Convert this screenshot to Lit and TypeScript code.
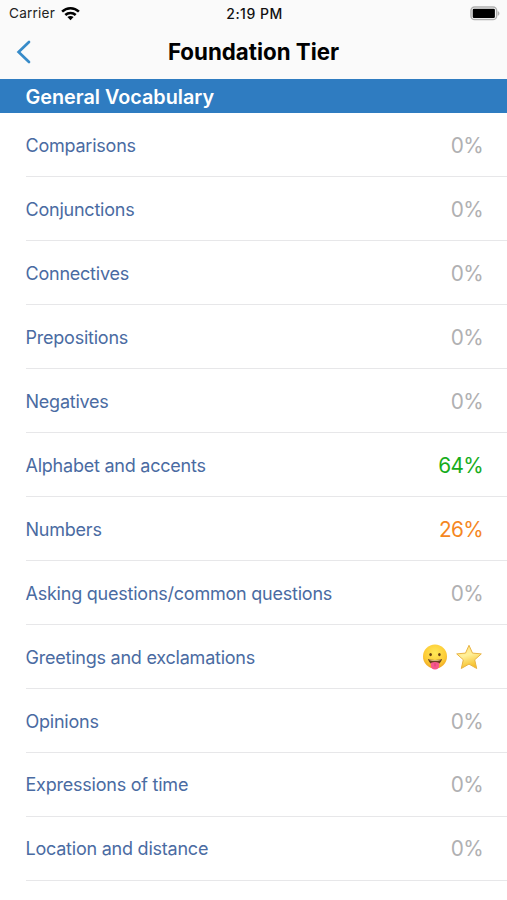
import { LitElement, html, css } from "lit";
import { customElement, property } from "lit/decorators.js";
import { classMap } from "lit/directives/class-map.js";

interface Topic {
  name: string;
  score?: number;
}

const topics: Topic[] = [
  { name: "Comparisons", score: 0 },
  { name: "Conjunctions", score: 0 },
  { name: "Connectives", score: 0 },
  { name: "Prepositions", score: 0 },
  { name: "Negatives", score: 0 },
  { name: "Alphabet and accents", score: 64 },
  { name: "Numbers", score: 26 },
  { name: "Asking questions/common questions", score: 0 },
  { name: "Greetings and exclamations" },
  { name: "Opinions", score: 0 },
  { name: "Expressions of time", score: 0 },
  { name: "Location and distance", score: 0 },
];

@customElement("status-bar")
export class StatusBar extends LitElement {
  static styles = css`
    :host {
      display: grid;
      grid-template-columns: 1fr auto 1fr;
      align-items: center;
      height: 27px;
      padding: 0 7px 0 9px;
      font-size: 13.6px;
      line-height: 27px;
      color: #222;
    }
    .carrier {
      display: flex;
      align-items: center;
      gap: 6px;
      letter-spacing: 0.2px;
    }
    .time {
      font-size: 14px;
      font-weight: 500;
      color: #111;
      letter-spacing: 0.5px;
    }
    .battery {
      justify-self: end;
    }
    svg {
      display: block;
    }
  `;

  render() {
    return html`
      <div class="carrier">
        <span>Carrier</span>
        <svg width="19" height="15" viewBox="0 0 19 15">
          <g fill="none" stroke="#000" stroke-width="2.5">
            <path d="M1.1 5.7C5.8 1.1 13.2 1.1 17.9 5.7" />
            <path d="M4.3 9C7.2 6.2 11.8 6.2 14.7 9" />
          </g>
          <path d="M6.4 11.1C8.2 9.5 10.8 9.5 12.6 11.1L9.5 14.2Z" />
        </svg>
      </div>
      <span class="time">2:19 PM</span>
      <svg class="battery" width="30" height="15" viewBox="0 0 30 15">
        <rect x="1" y="1" width="25.6" height="12.6" rx="3.6" fill="#fff" stroke="#b0b0b0" stroke-width="1.5" />
        <rect x="2.7" y="2.7" width="22.2" height="9.2" rx="1.2" />
        <path d="M27.7 4.9C30 5.7 30 8.9 27.7 9.7Z" fill="#b0b0b0" />
      </svg>
    `;
  }
}

@customElement("nav-header")
export class NavHeader extends LitElement {
  static styles = css`
    :host {
      display: grid;
      grid-template-columns: 60px 1fr 60px;
      align-items: center;
      height: 52px;
      box-sizing: border-box;
      padding-bottom: 2px;
    }
    .back {
      padding: 0;
      border: 0;
      background: none;
      justify-self: start;
      margin-left: 16px;
    }
    svg {
      display: block;
    }
    .title {
      margin: 0;
      text-align: center;
      font-size: 22.3px;
      font-weight: 700;
      line-height: 28px;
      color: #000;
    }
  `;

  render() {
    return html`
      <button class="back" aria-label="Back">
        <svg width="16" height="24" viewBox="0 0 16 24">
          <path d="M13 2L2.6 12L13 22" fill="none" stroke="#378bc9" stroke-width="2.7" stroke-linecap="round" />
        </svg>
      </button>
      <h1 class="title">Foundation Tier</h1>
    `;
  }
}

@customElement("reward-icons")
export class RewardIcons extends LitElement {
  static styles = css`
    :host {
      display: flex;
      align-items: center;
      gap: 8px;
    }
    svg {
      display: block;
    }
  `;

  render() {
    return html`
      <svg width="26" height="26" viewBox="0 0 26 26">
        <defs>
          <radialGradient id="face" cx=".5" cy=".35" r=".7">
            <stop offset="0" stop-color="#ffe958" />
            <stop offset=".65" stop-color="#fdcb36" />
            <stop offset="1" stop-color="#e99a1c" />
          </radialGradient>
        </defs>
        <circle cx="13" cy="12.6" r="12" fill="url(#face)" />
        <ellipse cx="8.6" cy="10.6" rx="1.3" ry="1.7" fill="#674013" />
        <ellipse cx="17.4" cy="10.6" rx="1.3" ry="1.7" fill="#674013" />
        <path d="M6 15Q13 17 20 15Q19 20.5 13 20.5Q7 20.5 6 15Z" fill="#67401b" />
        <path d="M7.2 15.4Q13 17 18.8 15.4L18.3 16.3Q13 17.5 7.7 16.3Z" fill="#f6dda0" />
        <path d="M8.8 19Q13 17 17.2 19V21.5Q17 25.6 13 25.6Q9 25.6 8.8 21.5Z" fill="#f4578d" />
        <path d="M13 19.3V22.3" stroke="#d93775" stroke-width=".8" />
      </svg>
      <svg width="26" height="26" viewBox="0 0 26 26">
        <defs>
          <linearGradient id="star" x1="0" y1="0" x2=".3" y2="1">
            <stop offset="0" stop-color="#ffe173" />
            <stop offset=".5" stop-color="#fff09a" />
            <stop offset="1" stop-color="#f6c22d" />
          </linearGradient>
        </defs>
        <path
          d="M13 1.3L16.5 9.1L25.3 9.9L18.7 15.8L20.7 24.5L13 20.1L5.3 24.5L7.3 15.8L.7 9.9L9.5 9.1Z"
          fill="url(#star)"
          stroke="#e9b445"
          stroke-width="1"
          stroke-linejoin="round"
        />
      </svg>
    `;
  }
}

@customElement("topic-row")
export class TopicRow extends LitElement {
  @property({ attribute: false }) topic!: Topic;

  static styles = css`
    :host {
      display: flex;
      align-items: center;
      justify-content: space-between;
      box-sizing: border-box;
      height: 63.94px;
      margin-left: 25.5px;
      padding: 1.7px 25px 0 0;
      border-bottom: 1px solid #e7e7e9;
    }
    .name {
      font-size: 18px;
      letter-spacing: -0.23px;
      color: #4a6ba2;
    }
    .score {
      font-size: 20.8px;
      letter-spacing: -0.7px;
      margin-right: -1px;
      color: #b0b0b2;
    }
    .good {
      color: #17ad1b;
    }
    .fair {
      color: #f5871f;
    }
  `;

  render() {
    const { name, score } = this.topic;
    return html`
      <span class="name">${name}</span>
      ${score === undefined
        ? html`<reward-icons></reward-icons>`
        : html`<span class=${classMap({ score: true, good: score >= 50, fair: score > 0 && score < 50 })}
            >${score}%</span
          >`}
    `;
  }
}

@customElement("app-root")
export class AppRoot extends LitElement {
  static styles = css`
    :host {
      display: block;
      height: 900px;
      overflow: hidden;
      background: #fff;
      font-family: Inter, "Liberation Sans", sans-serif;
    }
    .top {
      background: #fafafa;
    }
    .section {
      margin: 0;
      height: 34.3px;
      padding-left: 25.5px;
      background: #2f7cc1;
      color: #fff;
      font-size: 19.8px;
      font-weight: 600;
      line-height: 36px;
    }
  `;

  render() {
    return html`
      <div class="top">
        <status-bar></status-bar>
        <nav-header></nav-header>
      </div>
      <h2 class="section">General Vocabulary</h2>
      ${topics.map((topic) => html`<topic-row .topic=${topic}></topic-row>`)}
    `;
  }
}
